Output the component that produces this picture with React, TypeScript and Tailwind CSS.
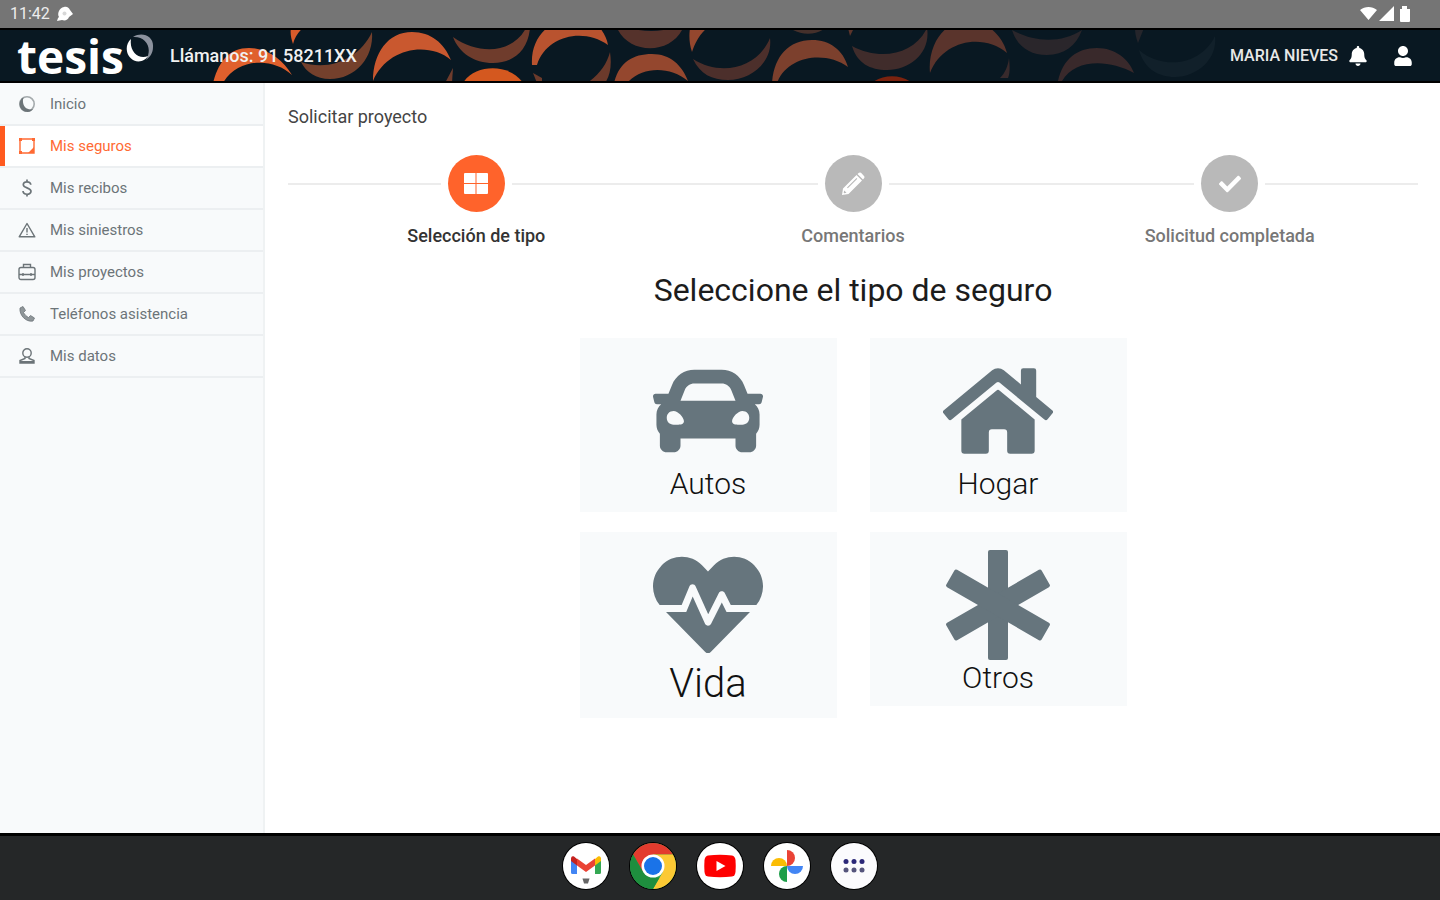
import { ReactNode, useState } from "react";
import { FaBell, FaCar, FaCheck, FaHeartbeat, FaHome, FaUser } from "react-icons/fa";

interface MenuItem {
  id: string;
  label: string;
  icon: ReactNode;
}

interface Step {
  label: string;
  icon: ReactNode;
}

interface IconProps {
  size?: number;
  className?: string;
}

const outline = {
  width: 18,
  height: 18,
  viewBox: "0 0 18 18",
  fill: "none",
  stroke: "currentColor",
  strokeWidth: 1.4,
};

const menuItems: MenuItem[] = [
  {
    id: "inicio",
    label: "Inicio",
    icon: (
      <svg {...outline}>
        <circle cx="9" cy="9" r="7.2" strokeWidth="1.6" opacity="0.6" />
        <path d="M5.5 2.2C-.5 5.5 .5 15 7.5 16.8C12 17.5 14 15.5 15 14C9 16 3 10.5 5.5 2.2Z" fill="currentColor" stroke="none" />
      </svg>
    ),
  },
  {
    id: "seguros",
    label: "Mis seguros",
    icon: (
      <svg {...outline}>
        <path d="M2 2H16V16H2Z" />
        <path d="M1 1h3v3H1zM14 1h3v3h-3zM1 14h3v3H1zM16 10v6h-6z" fill="currentColor" stroke="none" />
      </svg>
    ),
  },
  {
    id: "recibos",
    label: "Mis recibos",
    icon: (
      <svg {...outline}>
        <path d="M9 .5V3M9 15V17.5M12.8 5.8C12.5 1.8 5.3 1.8 5.3 5.8C5.3 9.3 13 8.5 13 12.3C13 16.3 5.2 16.2 5 12" strokeWidth="1.7" />
      </svg>
    ),
  },
  {
    id: "siniestros",
    label: "Mis siniestros",
    icon: (
      <svg {...outline}>
        <path d="M9 2.5L16.8 15.8H1.2Z" strokeLinejoin="round" />
        <path d="M9 7V11.5M9 12.8V14" />
      </svg>
    ),
  },
  {
    id: "proyectos",
    label: "Mis proyectos",
    icon: (
      <svg {...outline}>
        <rect x="1" y="4.5" width="16" height="12" rx="2" />
        <path d="M5.5 4.5V1.5H12.5V4.5M1 11.5H17M5 10V13M13 10V13" />
      </svg>
    ),
  },
  {
    id: "telefonos",
    label: "Teléfonos asistencia",
    icon: (
      <svg {...outline}>
        <path d="M2 3L5 1.5L7.5 5.5L5.5 7.5C6.5 9.5 8.5 11.5 10.5 12.5L12.5 10.5L16.5 13L15 16C8 17.5 1 10 2 3Z" fill="currentColor" fillOpacity="0.75" strokeWidth="0.8" strokeLinejoin="round" />
      </svg>
    ),
  },
  {
    id: "datos",
    label: "Mis datos",
    icon: (
      <svg {...outline}>
        <circle cx="9" cy="6" r="4.2" />
        <path d="M7 9.8V11.5L2 13.5V16H16V13.5L11 11.5V9.8M2 14.8H16" />
      </svg>
    ),
  },
];

const steps: Step[] = [
  {
    label: "Selección de tipo",
    icon: (
      <svg width="24" height="22" viewBox="0 0 24 22" fill="white">
        <path d="M1 0H11.5V10H0V1A1 1 0 0 1 1 0ZM12.5 0H23A1 1 0 0 1 24 1V10H12.5ZM0 11H11.5V21H1A1 1 0 0 1 0 20ZM12.5 11H24V20A1 1 0 0 1 23 21H12.5Z" />
      </svg>
    ),
  },
  {
    label: "Comentarios",
    icon: (
      <svg width="24" height="24" viewBox="0 0 24 24" fill="white">
        <path d="M1 23L2 16.5L15.5 3L21 8.5L7.5 22ZM16.5 2L18 .8Q19 0 20 .8L23 4Q24 5 23.2 6L22 7.5Z" />
        <path d="M3.2 18.5L5.5 20.8L3.2 21.3L2.7 20.8ZM6 15.5L15.5 6L16.3 6.8L6.8 16.3Z" fill="#b9b9b9" />
      </svg>
    ),
  },
  { label: "Solicitud completada", icon: <FaCheck size={22} /> },
];

function AsteriskIcon({ size = 110, className }: IconProps) {
  return (
    <svg width={size} height={size} viewBox="-55 -55 110 110" className={className} fill="currentColor">
      {[0, 60, 120].map((angle) => (
        <rect key={angle} x="-10" y="-55" width="20" height="110" rx="2" transform={`rotate(${angle})`} />
      ))}
    </svg>
  );
}

const insurances = [
  { label: "Autos", Icon: FaCar, large: false },
  { label: "Hogar", Icon: FaHome, large: false },
  { label: "Vida", Icon: FaHeartbeat, large: true },
  { label: "Otros", Icon: AsteriskIcon, large: false },
];

// Crescents of the header, fading out to the right
const crescents: Array<[string, string]> = [
  ["#e0602d", "M213 55C219 33 229 20 249 20C268 20 283 32 292 47C273 29 237 30 223 55Z"],
  ["#d95b2b", "M291 0H303C298 4 295 9 293 16C291 10 290 5 291 0Z"],
  ["#74402c", "M301 34C330 44 360 30 372 4C374 30 355 51 330 51C316 51 306 44 301 34Z"],
  ["#c9582f", "M373 53C373 25 388 4 412 4C431 4 444 15 451 32C428 13 387 20 373 53Z"],
  ["#6f3c2c", "M453 9C480 28 513 25 526 0H530C528 22 514 35 493 35C474 35 459 25 453 9Z"],
  ["#6f3c2c", "M453 40L445 55H452Z"],
  ["#d4581f", "M463 55C474 36 510 35 523 55Z"],
  ["#b9532f", "M532 37C531 21 537 8 547 0H600C604 5 607 11 608 17C583 -1 546 8 537 37Z"],
  ["#6b3a2b", "M610 24C612 38 610 48 605 55H587C599 47 607 36 610 24Z"],
  ["#6b3a2b", "M533 45L542 50V55H537Z"],
  ["#55322b", "M617 0H630C643 4 660 4 671 0H683C671 27 629 27 617 0Z"],
  ["#94472e", "M614 55C619 35 632 26 652 26C670 26 682 37 688 53C670 38 642 38 627 55Z"],
  ["#94472e", "M690 0H707C699 7 695 15 692 24C689 15 689 7 690 0Z"],
  ["#4c2f2b", "M693 31C721 49 758 40 770 10C773 34 751 52 728 52C712 52 700 46 693 31Z"],
  ["#7c402d", "M772 55C774 29 788 12 812 12C830 12 843 22 848 39C825 22 787 28 777 55Z"],
  ["#45302b", "M790 0H825C818 7 800 8 790 0Z"],
  ["#5b342b", "M848 0H854L850 8Z"],
  ["#402c2b", "M852 18C880 33 914 27 927 0C931 24 911 42 887 42C870 42 857 35 852 18Z"],
  ["#7c230f", "M872 55C882 46 902 46 912 55Z"],
  ["#5a342c", "M930 45C928 26 936 8 947 0H990C998 6 1004 14 1007 25C983 5 943 12 930 45Z"],
  ["#382a2c", "M1009 30C1010 39 1010 46 1008 50H1000C1005 45 1008 38 1009 30Z"],
  ["#2a262b", "M1012 2C1035 15 1062 15 1082 2C1076 18 1064 27 1047 27C1029 27 1017 18 1012 2Z"],
  ["#39292b", "M1058 53C1063 31 1077 20 1097 20C1115 20 1129 31 1134 45C1108 31 1075 31 1062 53Z"],
  ["#25252b", "M1135 0H1144L1138 15C1136 10 1135 5 1135 0Z"],
  ["#11202a", "M1139 22C1162 42 1201 38 1215 8C1218 31 1197 49 1175 49C1157 49 1144 40 1139 22Z"],
];

function StatusBar() {
  return (
    <div className="flex h-7 items-center justify-between bg-[#757575] pl-[10px] pr-[28px] text-white">
      <div className="flex items-center gap-[6px]">
        <span className="text-[16px] text-[#ededed]">11:42</span>
        <svg width="17" height="16" viewBox="0 0 17 16" fill="white">
          <path d="M8 1C11 0 13 2 14 4L17 8L13 11C12 14 9 15 6 14L1 15L2 12L3 11C1 8 3 2 8 1Z" />
          <circle cx="8.5" cy="7.5" r="2" fill="#d8d8d8" />
        </svg>
      </div>
      <svg width="52" height="18" viewBox="0 0 52 18" fill="white">
        <path d="M0 5C5 1 12 1 17 5L8.5 15ZM34 1V16H19ZM40 4H42V1H47V4H50V16A1 1 0 0 1 49 17H41A1 1 0 0 1 40 16Z" />
      </svg>
    </div>
  );
}

function Header() {
  return (
    <header className="relative flex h-[55px] items-center justify-between border-y-2 border-black bg-[#091822] pl-[17px] pr-[27px] text-white">
      <svg className="absolute inset-0 h-full w-full" viewBox="0 0 1440 51" preserveAspectRatio="xMinYMin slice">
        {crescents.map(([fill, d]) => (
          <path key={d} d={d} fill={fill} transform="translate(0 -2)" />
        ))}
      </svg>
      <div className="relative flex items-center">
        <a href="#inicio" className="flex items-start gap-[2px]">
          <span className="font-['Open_Sans'] text-[46px] leading-[46px] font-bold">tesis</span>
          <svg width="28" height="29" viewBox="0 0 28 29" className="mt-px">
            <path d="M7 3C17 -3 28 3 27 13C27 19 24 23 20 26C27 14 20 2 7 3Z" fill="#8c929e" />
            <path d="M5 5C-2 11 0 23 8 26.5C14 29 20 26 22 22C13 26 3 18 5 5Z" fill="white" />
          </svg>
        </a>
        <span className="ml-4 text-[18px] font-medium text-[#f1f1f1]">Llámanos: 91 58211XX</span>
      </div>
      <div className="relative flex items-center">
        <span className="text-[16px] font-medium text-[#e8e8e8]">MARIA NIEVES</span>
        <button aria-label="Notificaciones" className="ml-[10px]">
          <FaBell size={20} />
        </button>
        <button aria-label="Perfil" className="ml-[25px]">
          <FaUser size={20} />
        </button>
      </div>
    </header>
  );
}

function Sidebar() {
  const [active, setActive] = useState<string>("seguros");

  return (
    <nav className="w-[265px] shrink-0 border-r-2 border-[#eff2f3] bg-[#f8fafb] pt-px">
      {menuItems.map((item) => (
        <a
          key={item.id}
          href={`#${item.id}`}
          onClick={() => setActive(item.id)}
          className={`flex h-[42px] items-center gap-[14px] border-b-2 border-[#eceff1] pl-[18px] text-[15px] ${
            active === item.id ? "bg-white text-[#ff6a33] shadow-[inset_5px_0_0_#ff5a1f]" : "text-[#6c7478]"
          }`}
        >
          <span className="flex w-[18px] justify-center">{item.icon}</span>
          {item.label}
        </a>
      ))}
    </nav>
  );
}

function Stepper() {
  return (
    <ol className="mt-[26px] flex">
      {steps.map((step, index) => (
        <li key={step.label} className="flex flex-1 flex-col items-center">
          <div className="flex w-full items-center">
            <span className="mr-[7px] h-[2px] flex-1 bg-[#ececec]" />
            <span className={`flex h-[57px] w-[57px] items-center justify-center rounded-full text-white ${index === 0 ? "bg-[#ff632b]" : "bg-[#b9b9b9]"}`}>
              {step.icon}
            </span>
            <span className="ml-[7px] h-[2px] flex-1 bg-[#ececec]" />
          </div>
          <span className={`mt-3 text-[18px] leading-6 font-medium ${index === 0 ? "text-[#333]" : "text-[#777]"}`}>{step.label}</span>
        </li>
      ))}
    </ol>
  );
}

function Dock() {
  return (
    <footer className="flex h-[67px] items-center justify-center gap-[21px] border-t-[3px] border-black bg-[#252728] pb-1">
      <button aria-label="Gmail" className="rounded-full ring-1 ring-black">
        <svg width="46" height="46" viewBox="0 0 46 46">
          <circle cx="23" cy="23" r="23" fill="white" />
          <path d="M8 15L14 19V31H9.5A1.5 1.5 0 0 1 8 29.5Z" fill="#4285f4" />
          <path d="M38 15L32 19V31H36.5A1.5 1.5 0 0 0 38 29.5Z" fill="#34a853" />
          <path d="M32 16L35 13.5C37 12.5 38 14 38 16V18L32 22.5Z" fill="#fbbc04" />
          <path d="M14 16L11 13.5C9 12.5 8 14 8 16V18L14 22.5Z" fill="#c5221f" />
          <path d="M14 15.5L23 22L32 15.5V22.5L23 29L14 22.5Z" fill="#ea4335" />
          <path d="M19.5 35.5H26.5L25 40.5H21Z" fill="#666" />
        </svg>
      </button>
      <button aria-label="Chrome" className="rounded-full ring-1 ring-black">
        <svg width="46" height="46" viewBox="0 0 46 46">
          <circle cx="23" cy="23" r="23" fill="#34a853" />
          <path d="M3.1 11.5A23 23 0 0 1 42.9 11.5H23L13 28.8Z" fill="#e33b2e" />
          <path d="M42.9 11.5A23 23 0 0 1 23 46L33 28.8L23 11.5Z" fill="#fcc934" />
          <path d="M23 46A23 23 0 0 1 3.1 11.5L13 28.8L23 34.5H29.6Z" fill="#1e8e3e" />
          <circle cx="23" cy="23" r="11.5" fill="white" />
          <circle cx="23" cy="23" r="9" fill="#1a73e8" />
        </svg>
      </button>
      <button aria-label="YouTube" className="rounded-full ring-1 ring-black">
        <svg width="46" height="46" viewBox="0 0 46 46">
          <circle cx="23" cy="23" r="23" fill="white" />
          <path d="M11 12.5Q23 11 35 12.5Q38 13 38.5 17Q39 23 38.5 29Q38 33 35 33.5Q23 35 11 33.5Q8 33 7.5 29Q7 23 7.5 17Q8 13 11 12.5Z" fill="#fe0000" />
          <path d="M19.5 18V28L28.5 23Z" fill="white" />
        </svg>
      </button>
      <button aria-label="Google Fotos" className="rounded-full ring-1 ring-black">
        <svg width="46" height="46" viewBox="0 0 46 46">
          <circle cx="23" cy="23" r="23" fill="white" />
          <path d="M23 7A8 8 0 0 1 23 23Z" fill="#ea4335" />
          <path d="M39 23A8 8 0 0 1 23 23Z" fill="#4285f4" />
          <path d="M23 39A8 8 0 0 1 23 23Z" fill="#1e9e4a" />
          <path d="M7 23A8 8 0 0 1 23 23Z" fill="#fbbc04" />
        </svg>
      </button>
      <button aria-label="Aplicaciones" className="rounded-full ring-1 ring-black">
        <svg width="46" height="46" viewBox="0 0 46 46">
          <circle cx="23" cy="23" r="23" fill="#fbfbfd" />
          {[15, 23, 31].map((x) => (
            <g key={x}>
              <circle cx={x} cy="18.5" r="2.5" fill="#2b2878" />
              <circle cx={x} cy="27" r="2.5" fill="#55557c" />
            </g>
          ))}
        </svg>
      </button>
    </footer>
  );
}

export default function App() {
  return (
    <div className="flex min-h-screen flex-col bg-white font-[Roboto,sans-serif]">
      <StatusBar />
      <Header />
      <div className="flex flex-1">
        <Sidebar />
        <main className="flex-1 pt-[22px] pr-[22px] pl-[23px]">
          <h1 className="text-[18px] leading-6 text-[#444]">Solicitar proyecto</h1>
          <Stepper />
          <h2 className="mt-[22px] text-center text-[32px] leading-10 text-[#1c1c1c]">Seleccione el tipo de seguro</h2>
          <div className="mt-7 flex justify-center">
            <div className="grid grid-cols-[257px_257px] items-start gap-x-[33px] gap-y-5">
              {insurances.map(({ label, Icon, large }) => (
                <button key={label} className="flex flex-col items-center bg-[#f8fafb] pt-[18px] pb-[10px] font-light text-[#111]">
                  <Icon size={110} className="text-[#66757d]" />
                  <span className={large ? "text-[40px] leading-[48px]" : "text-[30px] leading-9"}>{label}</span>
                </button>
              ))}
            </div>
          </div>
        </main>
      </div>
      <Dock />
    </div>
  );
}
